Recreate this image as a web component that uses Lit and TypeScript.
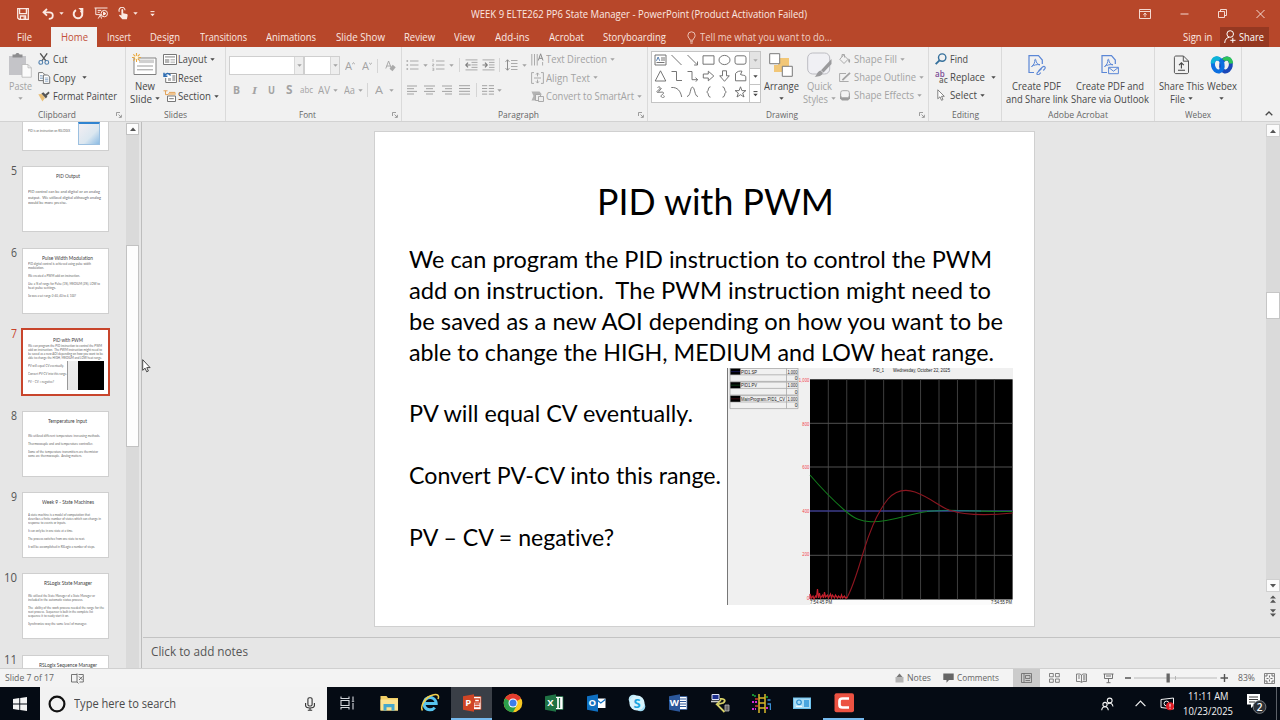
import { LitElement, html, css, svg, nothing } from "lit";
import type { TemplateResult } from "lit";
import { customElement, property, query, state } from "lit/decorators.js";
import { classMap } from "lit/directives/class-map.js";

/** Single line of text squeezed or stretched to a fixed width. */
@customElement("fit-text")
export class FitText extends LitElement {
  static styles = css`
    :host {
      display: inline-block;
      white-space: pre;
      flex-shrink: 0;
      text-align: left;
      font-variant-ligatures: none;
    }

    .inner {
      display: inline-block;
      transform-origin: 0 50%;
    }
  `;

  @property() text = "";
  @property({ type: Number }) w = 0;
  @state() private scale = 1;
  @query(".inner") private inner!: HTMLElement;

  firstUpdated() {
    this.style.width = `${this.w}px`;
    const natural = this.inner.getBoundingClientRect().width;
    if (natural > 0) this.scale = this.w / natural;
  }

  render() {
    return html`<span class="inner" style="transform: scaleX(${this.scale})">${this.text}</span>`;
  }
}

const t = (text: string, w: number) => html`<fit-text .text=${text} .w=${w}></fit-text>`;

const icon = (w: number, h: number, body: TemplateResult, cls = "") => html`
  <svg class="icon ${cls}" width=${w} height=${h} viewBox="0 0 ${w} ${h}" fill="none" stroke="currentColor">${body}</svg>
`;

const caret = (cls = "") => icon(5, 3, svg`<path d="M0.3 0.3h4.4L2.5 2.7z" fill="currentColor" stroke="none"/>`, `caret ${cls}`);

const launcher = icon(6, 6, svg`<path d="M0.5 4V0.5H4M2.5 2.5l2.5 2.5M5.4 2.8v2.6H2.8" stroke-width="0.8"/>`, "launcher");

// ---- title bar icons ----
const qat = {
  save: icon(12, 12, svg`<path d="M0.7 0.7h10.6v10.6H2.2L0.7 10z M2.6 0.7v5h6.8v-5M3.4 11.2V8h5.2v3.2" stroke-width="1.3"/><path d="M6.6 8.6h1.2v2.4H6.6z" fill="currentColor" stroke="none"/>`),
  undo: icon(12, 12, svg`<path d="M5 1L1.5 4.3 5 7.6M1.8 4.3h5.4c2 0 3.6 1.2 3.6 3.2s-1.6 3.4-4 3.4" stroke-width="1.8"/>`),
  redo: icon(12, 12, svg`<path d="M4 2.2A4.3 4.3 0 1 0 8.6 2.6" stroke-width="2"/><path d="M6.3 0h5v5z" fill="currentColor" stroke="none"/>`),
  show: icon(15, 13, svg`<path d="M0.5 1h13M1.8 1v6.6h5M6.5 7.6l-2.3 4M6.5 8l1 3.6M3.7 3.4h3.5M3.7 5.3h2" stroke-width="1"/><circle cx="10.3" cy="6.6" r="3.2" stroke-width="1"/><path d="M9.5 5.1v3l2.4-1.5z" fill="currentColor"/>`),
  touch: icon(11, 13, svg`<path d="M1.4 4.8A3 3 0 1 1 7 3.2" stroke-width="1.1"/><path d="M3.4 3c0-1.2 1.8-1.2 1.8 0v3.2l3.6 0.9c0.8 0.3 1 0.8 0.8 1.7l-0.7 3.4H4.3L1 8.6c0-1 1-1.1 2.4-0.1z" fill="currentColor" stroke="none"/>`),
  more: icon(5, 6, svg`<path d="M0.5 0.6h4" stroke-width="1"/><path d="M0.3 2.8h4.4L2.5 5.2z" fill="currentColor" stroke="none"/>`),
};

const win = {
  opts: icon(12, 10, svg`<path d="M0.5 0.5h11v9H0.5zM0.5 2.5h11M6 8V4.3M4.3 5.8L6 4.2l1.7 1.6" stroke-width="0.9"/>`),
  min: icon(9, 10, svg`<path d="M0.5 5h8" stroke-width="0.9"/>`),
  restore: icon(9, 10, svg`<path d="M0.5 2.5h6v6h-6zM2.5 2.5v-2h6v6h-2" stroke-width="0.9"/>`),
  close: icon(9, 10, svg`<path d="M0.5 1l8 8M8.5 1l-8 8" stroke-width="0.9"/>`),
};

// ---- ribbon icons ----
const rb = {
  paste: icon(24, 26, svg`<path d="M1 4h17v19H1z" fill="#c4c4c8" stroke="none"/><path d="M4.5 5.5V2.6H7.4C7.6 0.4 11.4 0.4 11.6 2.6h2.9v2.9z" fill="#8d8d8f" stroke="none"/><path d="M14 12.5h6l3.3 3.3v9.4H14z" fill="#fbfbfb" stroke="#b5b5b5" stroke-width="0.8"/><path d="M20 12.5v3.3h3.3" stroke="#b5b5b5" stroke-width="0.8"/>`),
  cut: icon(12, 12, svg`<path d="M2.2 0.3L8 8M9.2 0.3L3.8 8" stroke="#555" stroke-width="1.3"/><circle cx="2.8" cy="9.4" r="1.9" stroke="#4f7fae" stroke-width="1.1"/><circle cx="8.8" cy="9.4" r="1.9" stroke="#4f7fae" stroke-width="1.1"/>`),
  copy: icon(13, 12, svg`<path d="M0.6 0.6h4.2l2 2v6H0.6z" fill="#fff" stroke="#777"/><path d="M2 3.5h2.5M2 5h3M2 6.5h3" stroke="#7b9cc0" stroke-width="0.7"/><path d="M5.4 3h4.3l2 2v6.4H5.4z" fill="#fff" stroke="#777"/><path d="M6.9 6h3.4M6.9 7.6h3.4M6.9 9.2h3.4" stroke="#7b9cc0" stroke-width="0.8"/>`),
  painter: icon(12, 11, svg`<path d="M0.3 3.2L4 3l3 4-2.6 3.6z" fill="#eabf77" stroke="none"/><path d="M3.4 2.4l2-1.2 4 4.3-1.5 2z" fill="#555" stroke="none"/><path d="M7 3.6l3.7-3 0.9 1.4-3 3z" fill="#555" stroke="none"/>`),
  newSlide: icon(25, 24, svg`<path d="M2 5h22v16.5H2z" fill="#fff" stroke="#808080" stroke-width="1"/><path d="M7 6.5h15v3.6H7z" fill="#d0d0d0" stroke="none"/><path d="M5 13h16M5 16.8h16" stroke="#9b9b9b" stroke-width="1"/><path d="M4.5 0v9M0 4.5h9M1.3 1.3l6.4 6.4M7.7 1.3L1.3 7.7" stroke="#e9a83f" stroke-width="1.1"/><circle cx="4.5" cy="4.5" r="1.8" fill="#fff6dd" stroke="none"/>`),
  layout: icon(14, 11, svg`<path d="M0.5 0.5h13v10H0.5z" fill="#fff" stroke="#777"/><path d="M2 2h10v1.8H2zM2 5h4.3v4H2z" fill="#b6b6b6" stroke="none"/><path d="M7.5 5.5H12M7.5 7H12M7.5 8.6H12" stroke="#aaa" stroke-width="0.7"/>`),
  reset: icon(14, 11, svg`<path d="M4.5 1.5h9v9H2.7V6" fill="#fff" stroke="#777"/><path d="M9.3 3h3v6h-3zM5 6h3v3H5z" fill="#b6b6b6" stroke="none"/><path d="M1 0.8v3.4h3.4M1.2 4C2.5 1 6 0.3 7.6 3.5" stroke="#2f6eb3" stroke-width="1.5"/>`),
  section: icon(13, 12, svg`<path d="M0.5 0.8h4M2.5 0.8v4M2.5 4.6h9.5V2.4H6" stroke="#e2a35a" stroke-width="1"/><path d="M5 3h7.3v2H5z" fill="#f0c48f" stroke="none"/><path d="M4.5 6h8v5.5h-8z" fill="#fff" stroke="#777"/><path d="M6.2 8.7h4.6" stroke="#777"/>`),
  clear: icon(11, 12, svg`<path d="M0.8 8.5L3.6 1l2.8 7.5M1.7 6h3.8" stroke-width="0.9"/><path d="M4.5 8.8l3.2-4 3 2.4-3.2 4z" fill="#aaa" stroke="none"/>`),
  bullets: icon(13, 12, svg`<path d="M0.5 2h1.6M0.5 6h1.6M0.5 10h1.6" stroke-width="1.5"/><path d="M4 2h8.5M4 6h8.5M4 10h8.5" stroke-width="0.9"/>`),
  numbers: icon(13, 12, svg`<path d="M1 0v3M0.4 5h1.4v1H0.6v1h1.4M0.4 9.2h1.4v2.4H0.4M0.6 10.4h1" stroke-width="0.7"/><path d="M4 2h8.5M4 6h8.5M4 10h8.5" stroke-width="0.9"/>`),
  outdent: icon(13, 12, svg`<path d="M0.5 0.9h12M6.5 3.4h6M6.5 5.9h6M6.5 8.4h6M0.5 10.9h12" stroke-width="0.9"/><path d="M5.6 6H1M3 3.7L0.8 6 3 8.3" stroke="#7e7e7e" stroke-width="1.2"/>`),
  indent: icon(13, 12, svg`<path d="M0.5 0.9h12M7 3.4h5.5M7 5.9h5.5M7 8.4h5.5M0.5 10.9h12" stroke-width="0.9"/><path d="M0.5 6H5M3 3.7L5.2 6 3 8.3" stroke="#7e7e7e" stroke-width="1.2"/>`),
  spacing: icon(13, 12, svg`<path d="M2.5 0.8v10.4M0.6 2.8l1.9-2 1.9 2M0.6 9.2l1.9 2 1.9-2" stroke="#8c8c8c"/><path d="M6 1.5h6.5M6 4.5h6.5M6 7.5h6.5M6 10.5h6.5" stroke-width="0.9"/>`),
  alignL: icon(11, 10, svg`<path d="M0 1h10M0 3.7h7M0 6.4h10M0 9h7" stroke-width="1"/>`),
  alignC: icon(11, 10, svg`<path d="M0 1h11M2 3.7h7M0 6.4h11M2 9h7" stroke-width="1"/>`),
  alignR: icon(11, 10, svg`<path d="M1 1h10M4 3.7h7M1 6.4h10M4 9h7" stroke-width="1"/>`),
  justify: icon(11, 10, svg`<path d="M0 0.7h11M0 3.5h11M0 6.3h11M0 9.1h11" stroke-width="1"/>`),
  columns: icon(12, 10, svg`<path d="M0 0.7h5.2M0 3.5h5.2M0 6.3h5.2M0 9.1h5.2M6.8 0.7H12M6.8 3.5H12M6.8 6.3H12M6.8 9.1H12" stroke-width="1"/>`),
  textDir: icon(13, 13, svg`<path d="M0.8 1v11.5M3.5 1v11.5M6.2 1v11.5" stroke-width="0.9"/><path d="M7.3 7.5L9.6 0.8 12 7.5M8.2 5.3h2.9" stroke="#888" stroke-width="1"/><path d="M11.6 9v3.5" stroke-width="0.9"/>`),
  alignText: icon(13, 12, svg`<path d="M3 0.6H0.6v10.8H3M10 0.6h2.4v10.8H10M6.5 1v3.4M6.5 7.6V11M5 2.6l1.5-1.7L8 2.6M5 9.4l1.5 1.7L8 9.4M3 6h7" stroke-width="0.9"/>`),
  smartArt: icon(13, 11, svg`<path d="M0.5 0.5h8l2.5 3H5.5v6H0.5l2-4.5z" fill="#b3b3b3" stroke="none"/><path d="M4.5 3.5h5v6h-5z" fill="#eee" stroke-width="0.9"/><path d="M7.5 5.5h5v5h-5z" fill="#eee" stroke-width="0.9"/>`),
  arrange: icon(24, 24, svg`<path d="M9 5h11v13H9z" fill="#f2c777" stroke="none"/><path d="M5 12h8v7H5z" fill="#f2c777" stroke="none"/><path d="M0.7 0.7h10v10h-10zM13.3 13.3h10v10h-10z" fill="#fff" stroke="#7a7a7a" stroke-width="1"/>`),
  quick: icon(25, 26, svg`<rect x="0.7" y="1" width="22" height="21" rx="5" fill="#f0f0f4" stroke="#bcbcc2"/><path d="M24.5 7v5l-8 8.5-2.5-2.2z" fill="#9a9a9c" stroke="none"/><path d="M13.5 18.4l2.4 2.4C15 24 12 24.6 7.5 24.8c2.5-1.5 2.5-5.6 6-6.4z" fill="#9a9a9c" stroke="none"/>`),
  fill: icon(12, 11, svg`<path d="M4.5 1L9 5.4 5 9.5 0.8 5.3zM3 3V0.5h2.5v3" stroke-width="0.9"/><path d="M9.5 4.5c2 0.5 2 3 1 4.5-1.3-1-1.6-2.5-1-4.5z" fill="currentColor" stroke="none"/>`),
  outline: icon(12, 11, svg`<path d="M7 1.5H0.6v8h9" stroke-width="0.9"/><path d="M3.4 8.2L11 0.8" stroke-width="1.8"/>`),
  effects: icon(12, 11, svg`<path d="M1 4v4.4L3 10.4h6l2-2V3.5z" fill="#9d9d9d" stroke="none"/><rect x="1.7" y="0.7" width="8.6" height="7" rx="2" fill="#f4f4f4" stroke-width="0.9"/>`),
  find: icon(12, 12, svg`<circle cx="7.2" cy="4.6" r="3.7" stroke="#35709c" stroke-width="1.4"/><path d="M4.5 7.3L0.7 11.2" stroke="#35709c" stroke-width="1.9"/>`),
  select: icon(10, 12, svg`<path d="M2.8 0.8v9l2.2-2 1.5 3.5 1.5-0.7-1.5-3.3h2.8z" fill="#fff" stroke="#777" stroke-width="0.9"/>`),
  pdfLink: icon(18, 20, svg`<path d="M6 17.5H1V0.7h9.5L14.3 5v4" stroke="#5b87d6" stroke-width="1.2"/><path d="M3.5 11.5C6 10 7 7 6.8 5c0-1 1-1 1 0C8 8 10 9.5 12 9.8c-3-0.7-6 0.3-8.5 1.7z" stroke="#5b87d6" stroke-width="1"/><path d="M10.5 16l4-4c2-1.5 3.5 0.3 2.2 2l-1.4 1.5M13.6 13.5l-4.2 4.2c-1.4 1.6 0.4 2.8 1.9 1.4l1.5-1.5" stroke="#5b87d6" stroke-width="1.1"/>`),
  pdfMail: icon(18, 20, svg`<path d="M6 17.5H1V0.7h9.5L14.3 5v4" stroke="#5b87d6" stroke-width="1.2"/><path d="M3.5 11.5C6 10 7 7 6.8 5c0-1 1-1 1 0C8 8 10 9.5 12 9.8c-3-0.7-6 0.3-8.5 1.7z" stroke="#5b87d6" stroke-width="1"/><path d="M7.6 12.3h9.8v6.4H7.6zM7.8 12.6l4.7 3.6 4.7-3.6" stroke="#5b87d6" stroke-width="1"/>`),
  shareFile: icon(17, 20, svg`<path d="M3 1h7.5l5 5v11c0 1-0.6 1.6-1.6 1.6H3c-1 0-1.6-0.6-1.6-1.6V2.6C1.4 1.6 2 1 3 1zM10.3 1v5.2h5" stroke="#555" stroke-width="1"/><path d="M8.4 13.4V8M6 10.2l2.4-2.4 2.4 2.4M5 15.3h7" stroke="#444" stroke-width="1.1"/>`),
  webex: icon(24, 20, svg`<ellipse cx="16" cy="10" rx="4.8" ry="6.6" transform="rotate(12 16 10)" stroke="#1a48b8" stroke-width="4"/><ellipse cx="7.800" cy="10" rx="4.8" ry="6.6" transform="rotate(-12 7.800 10)" stroke="#0c6fe0" stroke-width="4"/><path d="M2.6 8.5C2.8 3.200 7 2 9.500 4.800" stroke="#0cb4d8" stroke-width="4"/><path d="M13.600 5.200c2-2.800 7-2.400 7.600 3.300" stroke="#2cc45a" stroke-width="4"/>`),
};

// three rows of the shape gallery, each glyph on a 12x12 box
const SHAPES = [
  svg`<path d="M0.5 1h11v10h-11z M6.5 4h4M6.5 6h4M2 8.5h8"/><path d="M2 6.8L3.6 3l1.6 3.8" stroke="#4472a8"/>`,
  svg`<path d="M1 1l10 10"/>`,
  svg`<path d="M1 1l9.5 9.5M11 7.5V11H7.6"/>`,
  svg`<path d="M0.5 1.8h11v8.4h-11z"/>`,
  svg`<ellipse cx="6" cy="6" rx="5.5" ry="4.6"/>`,
  svg`<rect x="0.5" y="1.8" width="11" height="8.4" rx="2"/>`,
  svg`<path d="M6 0.8l5.3 10.2H0.7z"/>`,
  svg`<path d="M1 1.5h5v9h5.5"/>`,
  svg`<path d="M1 1.5h4.5v8.2H11M9 7.7l2.2 2L9 11.8"/>`,
  svg`<path d="M0.8 4h5V1.2L11.3 6 5.8 10.8V8h-5z"/>`,
  svg`<path d="M4 0.8h4v5h2.8L6 11.3 1.2 5.8H4z"/>`,
  svg`<path d="M1 10.8V3.5C3 1.2 5 0.8 7.5 1.2L6 4.5c2 1 4.5 0.5 5.3 2v4.3z"/>`,
  svg`<path d="M3 1.5C6-0.5 6.5 2.5 4 4S2 7 5 6.4s5-0.4 3.5 1.6S5.5 9 7 11s4 0 2-1.6M7 2L4 6"/>`,
  svg`<path d="M0.8 1.5C7 1 10 5 11.2 11"/>`,
  svg`<path d="M0.5 10.5C4.5 10 3.5 1 6 1.2S8 10.5 11.5 10.5"/>`,
  svg`<path d="M8 0.8C5 0.8 6.7 5 4.2 6 6.7 7 5 11.2 8 11.2"/>`,
  svg`<path d="M4 0.8C7 0.8 5.3 5 7.8 6 5.3 7 7 11.2 4 11.2"/>`,
  svg`<path d="M6 0.8l1.4 3.8h4L8.2 7l1.3 4L6 8.7 2.5 11l1.3-4L0.6 4.6h4z"/>`,
];

interface TextLine {
  text: string;
  w: number;
}

interface Thumb {
  num: number;
  numW: number;
  title: string;
  titleW: number;
  kind: string;
  lines: TextLine[];
}

const l = (text = "", w = 0): TextLine => ({ text, w });

const THUMBS: Thumb[] = [
  // scrolled halfway out of the panel, so it carries no number or title
  { num: 4, numW: 0, title: "", titleW: 0, kind: "picture", lines: [l("PID is an instruction on RSLOGIX", 42)] },
  {
    num: 5, numW: 6, title: "PID Output", titleW: 24, kind: "large",
    lines: [l("PID control can be and digital or an analog", 72), l("output.  We utilized digital although analog", 73), l("would be more precise.", 39)],
  },
  {
    num: 6, numW: 6, title: "Pulse Width Modulation", titleW: 51, kind: "",
    lines: [
      l("PID digital control is achieved using pulse width", 63), l("modulation.", 16), l(),
      l("We created a PWM add on instruction.", 52), l(),
      l("Use a % of range for Pulse (1%), MEDIUM (2%), LOW to", 72), l("heat pulse settings.", 28), l(),
      l("So was a set range 0-40, 40 to 4, 100?", 48),
    ],
  },
  {
    num: 7, numW: 6, title: "PID with PWM", titleW: 30, kind: "chart",
    lines: [
      l("We can program the PID instruction to control the PWM", 74), l("add on instruction.  The PWM instruction might need to", 74),
      l("be saved as a new AOI depending on how you want to be", 75), l("able to change the HIGH, MEDIUM and LOW heat range.", 74), l(),
      l("PV will equal CV eventually.", 36), l(), l("Convert PV-CV into this range.", 39), l(), l("PV – CV = negative?", 26),
    ],
  },
  {
    num: 8, numW: 6, title: "Temperature Input", titleW: 39, kind: "low",
    lines: [
      l("We utilized different temperature increasing methods.", 72), l(),
      l("Thermocouple and and temperature controller.", 65), l(),
      l("Some of the temperature transmitters are thermistor", 70), l("some are thermocouple.  Analog matters.", 54),
    ],
  },
  {
    num: 9, numW: 6, title: "Week 9 - State Machines", titleW: 52, kind: "mid",
    lines: [
      l("A state machine is a model of computation that", 62), l("describes a finite number of states which can change in", 73), l("response to events or inputs.", 38), l(),
      l("It can only be in one state at a time.", 45), l(), l("The process switches from one state to next.", 57), l(),
      l("It will be accomplished in RSLogix a number of steps.", 67),
    ],
  },
  {
    num: 10, numW: 13, title: "RSLogix State Manager", titleW: 48, kind: "mid",
    lines: [
      l("We utilized the State Manager of a State Manager or", 67), l("included in the automatic status process.", 55), l(),
      l("The  ability of the work process needed the range for the", 76), l("next process.  Sequencer is built in the complete list", 65), l("sequence it to ready start it on.", 41), l(),
      l("Synchronize way the same level of manager.", 59),
    ],
  },
  { num: 11, numW: 13, title: "RSLogix Sequence Manager", titleW: 58, kind: "", lines: [] },
];

@customElement("ppt-titlebar")
export class PptTitlebar extends LitElement {
  static styles = css`
    :host {
      display: block;
      height: 47px;
      background: #b7472a;
      color: #fbe9e3;
      font: 10.5px/20px "Open Sans", "Noto Sans", sans-serif;
    }

    .top {
      display: grid;
      grid-template-columns: 471px 1fr auto;
      align-items: center;
      height: 27px;
    }

    .qat {
      display: flex;
      align-items: center;
      height: 25px;
      padding-left: 17px;
    }

    .qat .icon:nth-child(2) { margin-left: 13px; }
    .qat .icon:nth-child(3) { margin-left: 5px; }
    .qat .icon:nth-child(4) { margin-left: 8px; }
    .qat .icon:nth-child(5) { margin-left: 10px; }
    .qat .icon:nth-child(6) { margin-left: 9px; }
    .qat .icon:nth-child(7) { margin-left: 4px; }
    .qat .icon:nth-child(8) { margin-left: 12px; }

    .win {
      display: flex;
      gap: 29px;
      align-items: center;
      height: 26px;
      padding-right: 15px;
    }

    .tabs {
      display: flex;
      height: 20px;
      align-items: stretch;
    }

    .tab {
      padding: 0 9.7px;
    }

    .tab.file {
      padding: 0 19px 0 17px;
    }

    .tab.active {
      background: #f3f2f1;
      color: #c2503a;
    }

    .tell {
      display: flex;
      align-items: center;
      gap: 4px;
      padding-left: 11px;
      color: #f0cfc4;
    }

    .right {
      display: flex;
      margin-left: auto;
      padding-right: 11px;
    }

    .share {
      display: flex;
      align-items: center;
      gap: 3px;
      width: 45px;
      padding-left: 4px;
      margin-left: 8px;
      background: #953821;
      color: #fff;
    }
  `;

  private tabs: [string, number][] = [
    ["File", 15], ["Home", 27], ["Insert", 24], ["Design", 30], ["Transitions", 47], ["Animations", 50], ["Slide Show", 49],
    ["Review", 31], ["View", 21], ["Add-ins", 34.5], ["Acrobat", 35], ["Storyboarding", 63],
  ];

  render() {
    return html`
      <div class="top">
        <div class="qat">${qat.save}${qat.undo}${caret()}${qat.redo}${qat.show}${qat.touch}${caret()}${qat.more}</div>
        ${t("WEEK 9 ELTE262 PP6 State Manager - PowerPoint (Product Activation Failed)", 336)}
        <div class="win">${win.opts}${win.min}${win.restore}${win.close}</div>
      </div>
      <div class="tabs">
        ${this.tabs.map(
          ([name, w]) => html`<div class=${classMap({ tab: true, file: name === "File", active: name === "Home" })}>${t(name, w)}</div>`
        )}
        <div class="tell">
          ${icon(9, 13, svg`<path d="M3 9.2C3 7.4 0.9 7 0.9 4.4a3.6 3.6 0 0 1 7.2 0C8.1 7 6 7.4 6 9.2zM3 10.8h3M3.4 12.2h2.2" stroke-width="0.9"/>`)}
          ${t("Tell me what you want to do...", 132)}
        </div>
        <div class="right">
          ${t("Sign in", 29.5)}
          <div class="share">
            ${icon(12, 14, svg`<circle cx="6.2" cy="4" r="3.3"/><path d="M0.7 13C0.9 9.8 2.6 7.6 5 7.4M8.8 7.8v5M6.3 10.3h5.2"/>`)}
            ${t("Share", 25)}
          </div>
        </div>
      </div>
    `;
  }
}

@customElement("ppt-ribbon")
export class PptRibbon extends LitElement {
  static styles = css`
    :host {
      display: flex;
      height: 75px;
      box-sizing: border-box;
      background: #f1f1f1;
      border-bottom: 1px solid #d2d2d2;
      color: #484848;
      font: 10.5px/14px "Open Sans", "Noto Sans", sans-serif;
    }

    .group {
      display: grid;
      grid-template-rows: 61px 12px;
      box-sizing: border-box;
      border-right: 1px solid #dadada;
    }

    .body {
      display: flex;
      min-width: 0;
    }

    .caption {
      display: grid;
      grid-template-columns: 1fr 12px;
      justify-items: center;
      font-size: 9.6px;
      line-height: 13px;
      color: #666;
    }

    .caption.plain { grid-template-columns: 1fr; }

    .launcher {
      align-self: center;
      color: #888;
    }

    .g-clip { width: 126px; }
    .g-slides { width: 100px; }
    .g-font { width: 176px; }
    .g-para { width: 246px; }
    .g-draw { width: 281px; }
    .g-edit { width: 73px; }
    .g-adobe { width: 153px; }
    .g-webex { width: 87px; }

    .big {
      display: flex;
      flex-direction: column;
      align-items: center;
      line-height: 13px;
    }

    .big .glyph {
      display: flex;
      align-items: center;
      justify-content: center;
      height: 29px;
      padding-top: 3px;
    }

    .big .sub {
      display: flex;
      align-items: center;
      gap: 3px;
      height: 13px;
    }

    .big .first {
      height: 13px;
      display: flex;
    }

    .big fit-text { line-height: 14px; }

    .b-paste { margin-left: 7px; width: 26px; }
    .b-new { margin-left: 3px; width: 31px; }
    .b-arr { margin-left: 0; width: 40px; }
    .b-quick { margin-left: 1px; width: 35px; }
    .b-pdf1 { margin-left: 3px; width: 63px; }
    .b-pdf2 { margin-left: 2px; width: 79px; }
    .b-file { margin-left: 3px; width: 46px; }
    .b-webex { margin-left: 2px; width: 31px; }

    .rows {
      display: flex;
      flex-direction: column;
      padding-top: 3px;
    }

    .row {
      display: flex;
      align-items: center;
      height: 18.6px;
    }

    .rows.tight .row { height: 18px; }

    .row .lead {
      display: flex;
      width: 15px;
    }

    .row .caret { margin-left: 3px; }
    .wide .caret { margin-left: 6px; }

    .r-clip { margin-left: 5px; }
    .r-slides { margin-left: 3px; }
    .r-para { margin-left: 4px; }
    .r-draw { margin-left: 2px; }
    .r-edit { margin-left: 6px; }

    .dim { color: #a3a3a3; }

    .fonts {
      padding: 9px 0 0 3px;
    }

    .line {
      display: flex;
      align-items: center;
    }

    .line .icon { flex-shrink: 0; }
    .l2 { margin-top: 8px; }
    .space { flex-shrink: 0; }

    .paras { padding: 12px 0 0 3px; }
    .paras .line { height: 12px; }
    .paras .l2 { margin-top: 13px; }

    .combo {
      display: flex;
      justify-content: flex-end;
      box-sizing: border-box;
      height: 19px;
      border: 1px solid #cfcfcf;
      background: #fff;
    }

    .combo .drop {
      display: flex;
      align-items: center;
      justify-content: center;
      width: 8px;
      background: #eee;
      border-left: 1px solid #d8d8d8;
    }

    .combo.face { width: 75px; }
    .combo.size { width: 36px; }
    .letter { font-size: 11px; }
    .bold { font-weight: 700; }
    .italic { font-family: "Liberation Serif", serif; font-style: italic; font-weight: 700; }
    .under { text-decoration: underline; font-weight: 700; }
    .strike { text-decoration: line-through; font-size: 9px; }
    .shadow { font-weight: 700; font-size: 12px; }
    .sep { width: 1px; height: 14px; background: #d5d5d5; }

    .gallery {
      display: grid;
      grid-template-columns: 97px 11px;
      box-sizing: border-box;
      width: 110px;
      height: 52px;
      margin: 4px 0 0 3px;
      border: 1px solid #c4c4c4;
      background: #fff;
    }

    .shapes {
      display: grid;
      grid-template-columns: repeat(6, 16px);
      grid-template-rows: repeat(3, 16px);
      place-items: center;
      color: #666;
    }

    .scroller {
      display: grid;
      grid-template-rows: 17px 16px 17px;
      border-left: 1px solid #c4c4c4;
    }

    .scroller span {
      display: flex;
      align-items: center;
      justify-content: center;
      border-bottom: 1px solid #c4c4c4;
    }

    .scroller span:first-child {
      background: #e3e3e3;
      color: #aaa;
    }

    .scroller span:last-child { border-bottom: 0; }

    .abac {
      font-size: 8px;
      line-height: 6px;
      font-weight: 600;
      width: 15px;
    }

    .abac .ab { color: #7c4d96; }
    .abac .ac { display: block; padding-left: 4px; color: #666; }

    .tail {
      display: flex;
      flex: 1;
      align-items: flex-end;
      justify-content: flex-end;
      padding: 0 7px 5px 0;
    }
  `;

  private group(cls: string, name: string, w: number, body: unknown, hasLauncher = true) {
    return html`
      <div class="group ${cls}">
        <div class="body">${body}</div>
        <div class=${classMap({ caption: true, plain: !hasLauncher })}>${t(name, w)}${hasLauncher ? launcher : nothing}</div>
      </div>
    `;
  }

  private row(glyph: unknown, text: string, w: number, arrow = true, cls = "") {
    return html`<div class="row ${cls}"><span class="lead">${glyph}</span>${t(text, w)}${arrow ? caret() : nothing}</div>`;
  }

  private big(glyph: unknown, a: string, aw: number, b: string, bw: number, arrow: boolean, cls: string) {
    return html`
      <div class="big ${cls}">
        <span class="glyph">${glyph}</span>
        <span class="first">${t(a, aw)}</span>
        <span class="sub">${b ? t(b, bw) : nothing}${arrow ? caret() : nothing}</span>
      </div>
    `;
  }

  private sp(px: number) {
    return html`<span class="space" style="width: ${px}px"></span>`;
  }

  render() {
    const sp = this.sp;
    return html`
      ${this.group("g-clip", "Clipboard", 38, html`
        ${this.big(rb.paste, "Paste", 23, "", 0, true, "b-paste dim")}
        <div class="rows r-clip">
          ${this.row(rb.cut, "Cut", 14.5, false)}
          ${this.row(rb.copy, "Copy", 22.5, true, "wide")}
          ${this.row(rb.painter, "Format Painter", 64, false)}
        </div>
      `)}
      ${this.group("g-slides", "Slides", 23, html`
        ${this.big(rb.newSlide, "New", 20, "Slide", 22, true, "b-new")}
        <div class="rows r-slides">
          ${this.row(rb.layout, "Layout", 29)}
          ${this.row(rb.reset, "Reset", 24, false)}
          ${this.row(rb.section, "Section", 33)}
        </div>
      `, false)}
      ${this.group("g-font", "Font", 17, html`
        <div class="fonts dim">
          <div class="line">
            <span class="combo face"><span class="drop">${caret()}</span></span>
            <span class="combo size"><span class="drop">${caret()}</span></span>
            ${sp(5)}${t("A", 7)}${icon(3, 8, svg`<path d="M0 2.5L1.5 0.5 3 2.5" stroke-width="0.8"/>`)}
            ${sp(7)}${t("A", 7)}${icon(3, 8, svg`<path d="M0 0.5L1.5 2.5 3 0.5" stroke-width="0.8"/>`)}
            ${sp(5)}<span class="sep"></span>${sp(7)}${rb.clear}
          </div>
          <div class="line l2 letter">
            ${sp(4)}<span class="bold">${t("B", 7)}</span>${sp(12)}<span class="italic">${t("I", 5)}</span>
            ${sp(11)}<span class="under">${t("U", 7)}</span>${sp(11)}<span class="shadow">${t("S", 6.5)}</span>
            ${sp(7)}<span class="strike">${t("abc", 13)}</span>${sp(5)}<span>${t("AV", 12)}</span>${sp(3)}${caret()}
            ${sp(6)}${t("Aa", 11)}${sp(3)}${caret()}${sp(4)}<span class="sep"></span>${sp(7)}${t("A", 8)}${sp(6)}${caret()}
          </div>
        </div>
      `)}
      ${this.group("g-para", "Paragraph", 41, html`
        <div class="paras dim">
          <div class="line">
            ${sp(1)}${rb.bullets}${sp(4)}${caret()}${sp(4)}${rb.numbers}${sp(4)}${caret()}${sp(5)}<span class="sep"></span>${sp(5)}${rb.outdent}${sp(4)}${rb.indent}
            ${sp(4)}<span class="sep"></span>${sp(5)}${rb.spacing}${sp(4)}${caret()}
          </div>
          <div class="line l2">
            ${sp(2)}${rb.alignL}${sp(6)}${rb.alignC}${sp(6)}${rb.alignR}${sp(7)}${rb.justify}${sp(6)}<span class="sep"></span>${sp(5)}${rb.columns}${sp(3)}${caret()}
          </div>
        </div>
        <div class="rows r-para dim">
          ${this.row(rb.textDir, "Text Direction", 61)}
          ${this.row(rb.alignText, "Align Text", 44)}
          ${this.row(rb.smartArt, "Convert to SmartArt", 88)}
        </div>
      `)}
      ${this.group("g-draw", "Drawing", 32, html`
        <div class="gallery">
          <div class="shapes">
            ${SHAPES.map((s) => html`<svg width="13" height="12" viewBox="0 0 12 12" fill="none" stroke="currentColor" stroke-width="0.9">${s}</svg>`)}
          </div>
          <div class="scroller">
            <span>${caret()}</span><span>${caret()}</span>
            <span>${qat.more}</span>
          </div>
        </div>
        ${this.big(rb.arrange, "Arrange", 35, "", 0, true, "b-arr")}
        ${this.big(rb.quick, "Quick", 25, "Styles", 25, true, "b-quick dim")}
        <div class="rows tight r-draw dim">
          ${this.row(rb.fill, "Shape Fill", 43)}
          ${this.row(rb.outline, "Shape Outline", 62)}
          ${this.row(rb.effects, "Shape Effects", 60)}
        </div>
      `)}
      ${this.group("g-edit", "Editing", 27, html`
        <div class="rows tight r-edit">
          ${this.row(rb.find, "Find", 18, false)}
          ${this.row(html`<span class="abac"><span class="ab">ab</span><span class="ac">ac</span></span>`, "Replace", 35, true, "wide")}
          ${this.row(rb.select, "Select", 27)}
        </div>
      `, false)}
      ${this.group("g-adobe", "Adobe Acrobat", 60, html`
        ${this.big(rb.pdfLink, "Create PDF", 49, "and Share link", 62, false, "b-pdf1")}
        ${this.big(rb.pdfMail, "Create PDF and", 68, "Share via Outlook", 78, false, "b-pdf2")}
      `, false)}
      ${this.group("g-webex", "Webex", 26, html`
        ${this.big(rb.shareFile, "Share This", 45, "File", 15, true, "b-file")}
        ${this.big(rb.webex, "Webex", 30, "", 0, true, "b-webex")}
      `, false)}
      <div class="tail">${icon(8, 5, svg`<path d="M0.7 4.3L4 1l3.3 3.3" stroke-width="1.3"/>`)}</div>
    `;
  }
}

@customElement("trend-chart")
export class TrendChart extends LitElement {
  static styles = css`
    :host {
      display: block;
      width: 286px;
      height: 237px;
    }

    svg {
      display: block;
      font: 5px "Liberation Sans", Arial, sans-serif;
    }

    .axis { fill: #f0414d; }
    .label { fill: #222; }
  `;

  private pens = [
    { name: "PID1.SP", color: "#15154e", w: 16 },
    { name: "PID1.PV", color: "#0d3a17", w: 16 },
    { name: "MainProgram.PID1_CV", color: "#3a0c10", w: 44 },
  ];

  private scale: [string, number][] = [["1,000", 10.5], ["800", 7], ["600", 7], ["400", 7], ["200", 7], ["0", 2.6]];

  render() {
    const vertical = Array.from({ length: 10 }, (_, i) => 101.3 + i * 18.45);
    return html`
      <svg width="286" height="237" viewBox="0 0 286 237">
        <rect width="286" height="237" fill="#f0f0f0" />
        <rect width="1" height="237" fill="#777" />
        <rect x="83" y="231.5" width="203" height="5.5" fill="#fbfbfb" />
        ${this.pens.map(
          (p, i) => svg`
            <g transform="translate(3, ${i * 13.6})">
              <path d="M0 0.5h68M0 6.8h68M0 13.4h68M0 0v13.4M56.5 0v13.4M68 0v13.4" stroke="#aaa" stroke-width="0.8" fill="none"/>
              <rect x="0.4" y="0.6" width="10" height="6" fill="#000"/>
              <path d="M1 3.6h9" stroke=${p.color} stroke-width="1"/>
              <text class="label" x="11" y="5.5" textLength=${p.w} lengthAdjust="spacingAndGlyphs">${p.name}</text>
              <text class="label" x="57.5" y="5.5" textLength="10" lengthAdjust="spacingAndGlyphs">1.000</text>
              <text class="label" x="64.8" y="12">0</text>
            </g>`
        )}
        <text class="label" x="146" y="3.6" textLength="11" lengthAdjust="spacingAndGlyphs">PID_1</text>
        <text class="label" x="166" y="3.6" textLength="57" lengthAdjust="spacingAndGlyphs">Wednesday, October 22, 2025</text>
        <rect x="83" y="11.3" width="202.6" height="220.2" fill="#000" />
        ${vertical.map((x) => svg`<path d="M${x} 11.3v220" stroke="#3e3e3e" stroke-width="1"/>`)}
        ${[55.3, 99, 143, 187.3].map((y) => svg`<path d="M83 ${y}h202" stroke="#505050" stroke-width="1"/>`)}
        ${this.scale.map(
          ([v, w], i) => svg`<text class="axis" x=${82.3 - w} y=${14.3 + i * 43.5} textLength=${w} lengthAdjust="spacingAndGlyphs">${v}</text>`
        )}
        <path d="M83 143h202.6" stroke="#3333a8" stroke-width="1" />
        <path d="M83 107C95 121 108 134 119 143.5C128 151 134 153.5 144 153.7C164 154 178 147 197 144C215 141 226 142.5 240 142.7S270 143.8 285.6 143.5" stroke="#127a1c" stroke-width="1.1" fill="none" />
        <path d="M200 143.3C220 142 240 142.5 254 143" stroke="#1e7078" stroke-width="1" fill="none" />
        <path d="M119 231C123 226 129 209 137 182C145 156 152 142 161 131C170 121 179 121 188 124C202 129 212 138 222 142C238 147.5 262 147.5 285.6 145" stroke="#8c1620" stroke-width="1.1" fill="none" />
        <path d="M83 231v-5l1.5 4 1.5-2 1 3 1.5-3 1 1 1-8 1 9 1-5 1 5 2-3 1 3 1-6 1 5 2-2 1 3 2-4 1 4 1-3 2 3 1-3 2 3 1-2 2 2 1-3 1 3 2-2 1 2 2-1" stroke="#c4202c" stroke-width="1.2" fill="none" />
        <text class="label" x="83" y="236" textLength="22" lengthAdjust="spacingAndGlyphs">7:54:45 PM</text>
        <text class="label" x="264" y="236" textLength="21" lengthAdjust="spacingAndGlyphs">7:54:55 PM</text>
      </svg>
    `;
  }
}

@customElement("slide-list")
export class SlideList extends LitElement {
  static styles = css`
    :host {
      display: grid;
      grid-template-columns: 126px 13px;
      height: 100%;
      overflow: hidden;
      box-sizing: border-box;
      border-right: 1px solid #bdbdbd;
      font-family: "Open Sans", "Noto Sans", sans-serif;
    }

    .list {
      display: flex;
      flex-direction: column;
      gap: 15.4px;
      margin-top: -37px;
    }

    .item {
      display: grid;
      grid-template-columns: 17px 87px;
      column-gap: 5px;
    }

    .num {
      display: flex;
      justify-content: flex-end;
      font-size: 12px;
      line-height: 10px;
      color: #555;
    }

    .slide {
      position: relative;
      box-sizing: border-box;
      height: 66px;
      padding: 5px 0 0 5px;
      border: 1px solid #cfcfcf;
      background: #fff;
      font-family: Lato, "Open Sans", sans-serif;
      color: #3c3c3c;
      overflow: hidden;
    }

    .active .num { color: #c8452c; }

    .active .slide {
      outline: 1px solid #c8452c;
      border-color: #c8452c;
    }

    .title {
      height: 8px;
      text-align: center;
      padding-right: 1px;
      font-size: 5.4px;
      line-height: 8px;
    }

    .text {
      font-size: 3.2px;
      line-height: 4px;
      color: #666;
    }

    .text div { height: 4px; }
    .low .text { padding-top: 9px; }
    .mid .text { padding-top: 7px; }
    .large .text { padding-top: 9px; font-size: 4px; line-height: 5.4px; }
    .large .text div { height: 5.4px; }
    .chart .title { padding-top: 1px; }

    .graph {
      position: absolute;
      right: 4px;
      bottom: 4px;
      width: 36px;
      height: 29px;
      border-left: 1px solid #999;
      background: linear-gradient(#eee, #e9e9e9);
      display: flex;
      justify-content: flex-end;
    }

    .graph::after {
      content: "";
      width: 26px;
      background: #000;
    }

    .picture .text { padding-top: 30px; }

    .shot {
      position: absolute;
      right: 8px;
      bottom: 5px;
      width: 20px;
      height: 20px;
      border: 1px solid #9cc0e0;
      border-top: 2px solid #2f83d0;
      background: linear-gradient(135deg, #f2eef2, #dbe7f0 60%, #8cbce4);
    }

    .bar {
      display: grid;
      grid-template-rows: 12px 1fr 13px;
      margin: 1px 0 0 0;
      background: #dadada;
    }

    .btn, .handle {
      display: flex;
      align-items: center;
      justify-content: center;
      box-sizing: border-box;
      border: 1px solid #c2c2c2;
      background: #fdfdfd;
      color: #555;
    }

    .track { padding-top: 110px; }
    .handle { height: 202px; }
  `;

  render() {
    return html`
      <div class="list">
        ${THUMBS.map(
          (s) => html`
            <div class=${classMap({ item: true, active: s.num === 7 })}>
              <div class="num">${s.numW ? t(String(s.num), s.numW) : nothing}</div>
              <div class="slide ${s.kind}">
                <div class="title">${s.title ? t(s.title, s.titleW) : nothing}</div>
                <div class="text">${s.lines.map((x) => html`<div>${x.text ? t(x.text, x.w) : nothing}</div>`)}</div>
                ${s.kind === "chart" ? html`<div class="graph"></div>` : nothing}
                ${s.kind === "picture" ? html`<div class="shot"></div>` : nothing}
              </div>
            </div>
          `
        )}
      </div>
      <div class="bar">
        <span class="btn">${icon(6, 4, svg`<path d="M0 4l3-3.6L6 4z" fill="currentColor" stroke="none"/>`)}</span>
        <div class="track"><div class="handle"></div></div>
        <span class="btn">${icon(6, 4, svg`<path d="M0 0l3 3.6L6 0z" fill="currentColor" stroke="none"/>`)}</span>
      </div>
    `;
  }
}

@customElement("slide-stage")
export class SlideStage extends LitElement {
  static styles = css`
    :host {
      display: grid;
      grid-template-rows: 516px 1fr;
      margin-left: 1px;
      height: 100%;
    }

    .view {
      display: grid;
      grid-template-columns: 1fr 14px;
      border-bottom: 1px solid #c3c3c3;
    }

    .canvas { padding: 9px 0 0 231px; }

    .slide {
      position: relative;
      box-sizing: border-box;
      width: 661px;
      height: 496px;
      border: 1px solid #d0d0d0;
      background: #fff;
      color: #000;
      font-family: Lato, "Open Sans", sans-serif;
    }

    .title {
      position: absolute;
      left: 222px;
      top: 47px;
      font-size: 36.5px;
      line-height: 44px;
    }

    .body {
      position: absolute;
      left: 34px;
      top: 112.4px;
      font-size: 23.5px;
      line-height: 30.8px;
    }

    .body div { height: 30.8px; }

    .chart {
      position: absolute;
      left: 352px;
      top: 236px;
    }

    .vbar {
      display: flex;
      flex-direction: column;
      padding-top: 2px;
      color: #555;
    }

    .vbar .btn {
      display: flex;
      align-items: center;
      justify-content: center;
      box-sizing: border-box;
      height: 13px;
      border: 1px solid #d0d0d0;
      background: #fbfbfb;
    }

    .vbar .btn.bare { border: 0; background: none; height: 14px; }

    .track {
      height: 442px;
      background: #dadada;
      box-sizing: border-box;
      padding-top: 155px;
    }

    .handle {
      box-sizing: border-box;
      height: 27px;
      border: 1px solid #c6c6c6;
      background: #fff;
    }

    .notes {
      padding: 5px 0 0 8px;
      font: 11.8px/17px "Open Sans", "Noto Sans", sans-serif;
      color: #555;
    }
  `;

  private lines: TextLine[] = [
    l("We can program the PID instruction to control the PWM", 583), l("add on instruction.  The PWM instruction might need to", 582),
    l("be saved as a new AOI depending on how you want to be", 594), l("able to change the HIGH, MEDIUM and LOW heat range.", 585), l(),
    l("PV will equal CV eventually.", 284), l(), l("Convert PV-CV into this range.", 312), l(), l("PV – CV = negative?", 205),
  ];

  render() {
    const up = svg`<path d="M0 4l3-3.6L6 4z" fill="currentColor" stroke="none"/>`;
    const down = svg`<path d="M0 0l3 3.6L6 0z" fill="currentColor" stroke="none"/>`;
    return html`
      <div class="view">
        <div class="canvas">
          <div class="slide">
            <div class="title">${t("PID with PWM", 237)}</div>
            <div class="body">${this.lines.map((x) => html`<div>${x.text ? t(x.text, x.w) : nothing}</div>`)}</div>
            <trend-chart class="chart"></trend-chart>
          </div>
        </div>
        <div class="vbar">
          <span class="btn">${icon(6, 4, up)}</span>
          <div class="track"><div class="handle"></div></div>
          <span class="btn">${icon(6, 4, down)}</span>
          <span class="btn bare">${icon(6, 8, svg`<path d="M0 3.6l3-3.2 3 3.2zM0 7.8l3-3.2 3 3.2z" fill="currentColor" stroke="none"/>`)}</span>
          <span class="btn bare">${icon(6, 8, svg`<path d="M0 0.3l3 3.2 3-3.2zM0 4.5l3 3.2 3-3.2z" fill="currentColor" stroke="none"/>`)}</span>
        </div>
      </div>
      <div class="notes">${t("Click to add notes", 97)}</div>
    `;
  }
}

@customElement("ppt-status")
export class PptStatus extends LitElement {
  static styles = css`
    :host {
      display: flex;
      align-items: center;
      height: 19px;
      box-sizing: border-box;
      padding-left: 5px;
      border-top: 1px solid #d0d0d0;
      background: #f3f3f3;
      color: #666;
      font: 9.6px/16px "Open Sans", "Noto Sans", sans-serif;
    }

    .book { margin-left: 17px; }

    .right {
      display: flex;
      align-items: center;
      height: 100%;
      margin-left: auto;
      padding-right: 5px;
    }

    .notes { margin-right: 3px; }
    .comments { margin: 0 3px 0 12px; }

    .mode {
      display: flex;
      align-items: center;
      justify-content: center;
      width: 27.2px;
      height: 100%;
    }

    .mode.on {
      background: #cbcbcb;
      margin-left: 14px;
    }

    .zoom { margin: 0 10px 0 3px; }
    .fit { margin-left: 9px; }
  `;

  render() {
    return html`
      ${t("Slide 7 of 17", 49)}
      ${icon(13, 11, svg`<path d="M6 1.5H0.5v7.5H6V0.5M6 9l1.5 1.5M7.5 1.5h4.8V9H8.5M8 3.5l3.5 3.5M11.5 3.5L8 7" stroke-width="0.9"/>`, "book")}
      <div class="right">
        ${icon(9, 10, svg`<path d="M0.5 4h8v5.5h-8z" fill="#b5b5b5" stroke="none"/><path d="M1.5 4l3-3.5 3 3.5z" fill="#777" stroke="none"/>`, "notes")}
        ${t("Notes", 24)}
        ${icon(11, 10, svg`<path d="M0.3 0.5h10.4v6.5H6L3.5 9.7V7H0.3z" fill="#666" stroke="none"/>`, "comments")}
        ${t("Comments", 42)}
        <span class="mode on">${icon(11, 10, svg`<path d="M0.5 0.5h10v9h-10zM3 0.5v9M4.5 2.5h4.5v3H4.5zM4.5 7.5h4.5" stroke-width="0.8"/>`)}</span>
        <span class="mode">${icon(11, 10, svg`<path d="M0.5 0.5h3.8v3.3H0.5zM6.5 0.5h3.8v3.3H6.5zM0.5 6h3.8v3.3H0.5zM6.5 6h3.8v3.3H6.5z" stroke-width="0.8"/>`)}</span>
        <span class="mode">${icon(11, 10, svg`<path d="M0.5 1h3.5l1.5 1 1.5-1h3.5v7.5H7l-1.5 1-1.5-1H0.5zM5.5 2v7M2 3h2M2 5h2" stroke-width="0.8"/><path d="M7 2h2.5v5.5H7z" fill="#aaa" stroke="none"/>`)}</span>
        <span class="mode">${icon(11, 11, svg`<path d="M0.5 1h10M1.5 1v4.5h8V1M5.5 5.5v4M3.5 9.7h4M3 3h5" stroke-width="0.9"/>`)}</span>
        ${icon(103, 12, svg`<path d="M0 6h6M95.5 6h8M99.5 2v8" stroke="#555" stroke-width="1.4"/><path d="M9 6h83M50.5 4v4" stroke="#aaa" stroke-width="0.8"/><path d="M41.5 1.5h3.3v9h-3.3z" fill="#666" stroke="none"/>`, "zoom")}
        ${t("83%", 17)}
        ${icon(11, 11, svg`<path d="M0.5 0.5h10v10h-10z" stroke-width="0.8"/><path d="M2 4V2h2M7 2h2v2M2 7v2h2M9 7v2H7M5.5 2.5v2M5.5 6.5v2M2.5 5.5h2M6.5 5.5h2" stroke-width="0.9"/>`, "fit")}
      </div>
    `;
  }
}

const office = (color: string, dark: string, letter: string, sheet: TemplateResult) => svg`
  <path d="M9 2.5h9v13H9z" fill="#fff" stroke=${color} stroke-width="0.8"/>${sheet}
  <path d="M0 2.3L11 0.3v17.4L0 15.7z" fill=${dark}/>
  <text x="5.3" y="12.4" text-anchor="middle" fill="#fff" font-weight="700" font-size="9.5">${letter}</text>
`;

@customElement("win-taskbar")
export class WinTaskbar extends LitElement {
  static styles = css`
    :host {
      display: flex;
      height: 33px;
      background: #050b14;
      color: #f2f2f2;
      font: 11px/15px "Open Sans", "Noto Sans", sans-serif;
    }

    .start, .app {
      display: flex;
      align-items: center;
      justify-content: center;
      box-sizing: border-box;
    }

    .start { width: 40px; }

    .search {
      display: flex;
      align-items: center;
      box-sizing: border-box;
      width: 287px;
      padding: 0 12px 0 8px;
      background: #f2f2f2;
      color: #4a4a4a;
      font-size: 11.8px;
    }

    .search fit-text { margin: 0 auto 0 8px; }

    .app {
      width: 41.35px;
      border-bottom: 2px solid transparent;
    }

    .app.open { border-bottom-color: #76b9ed; }
    .app.front { background: #3a3f47; }
    .app svg { font-family: "Open Sans", sans-serif; margin-top: 1px; }

    .tray {
      display: flex;
      align-items: center;
      margin-left: auto;
    }

    .tray .up { margin: 0 14px 0 21px; }

    .clock {
      display: flex;
      flex-direction: column;
      align-items: center;
      width: 50px;
      margin: 0 0 0 8px;
      font-size: 10.6px;
    }

    .alerts { margin-left: 13px; }
    .peek { width: 1px; height: 33px; margin: 0 3px 0 9px; background: #5b6067; }
  `;

  private app(body: TemplateResult, cls = "") {
    return html`<div class="app ${cls}"><svg width="20" height="20" viewBox="-1 -1 20 20" fill="none">${body}</svg></div>`;
  }

  render() {
    return html`
      <div class="start">
        ${icon(14, 14, svg`<path d="M0 2l6.3-1v5.5H0zM7.2 0.9L14 0v6.5H7.2zM0 7.4h6.3v5.5L0 12zM7.2 7.4H14V14l-6.8-1z" fill="#f3f3f3" stroke="none"/>`)}
      </div>
      <div class="search">
        ${icon(18, 18, svg`<circle cx="9" cy="9" r="7.4" stroke="#111" stroke-width="2.2"/>`)}
        ${t("Type here to search", 102)}
        ${icon(10, 14, svg`<rect x="2.9" y="0.7" width="4.2" height="8.3" rx="1.5" stroke="#333" stroke-width="1.1"/><path d="M0.6 6v2.5C0.6 10 2 11 5 11s4.4-1 4.4-2.5V6M5 11v2.5M2.8 13.3h4.4" stroke="#333" stroke-width="1.1"/>`)}
      </div>
      ${this.app(svg`<path d="M2 2.5v2h8v-2M2 15.5v-2h8v2M2 6.5h8v5H2zM14 2.5v4M14 9v6.5M12.8 7.3h2.4" stroke="#d4d8dc" stroke-width="1.1"/>`)}
      ${this.app(svg`<path d="M0.5 2h6l1.5 2h10v12.5H0.5z" fill="#f1ce66"/><path d="M0.5 5.5h17.5v11H0.5z" fill="#fbe291"/><path d="M3.5 16.5V10h11v6.5h-3v-3.3h-5v3.3z" fill="#45a7cd"/>`)}
      ${this.app(svg`<path d="M3 9.5h12.2A6.2 6.2 0 1 0 13.8 13.6" stroke="#57c4ef" stroke-width="3"/><path d="M1.5 16.5C-1 13 3 5 9 2s10-1.5 8 3" stroke="#f2cf4d" stroke-width="1.5"/>`)}
      ${this.app(office("#c94a2a", "#d04525", "P", svg`<path d="M11.5 5h5v3h-5zM11.5 10h5M11.5 12.5h5" stroke="#d04525" stroke-width="1.4"/>`), "open front")}
      ${this.app(svg`
        <circle cx="9" cy="9" r="9.3" fill="#f8c822"/>
        <path d="M9 9L0.95 4.35A9.3 9.3 0 0 1 17.05 4.35z" fill="#e33b2e"/>
        <path d="M9 9L0.95 4.35A9.3 9.3 0 0 0 9 18.3L13 11z" fill="#2b9e4b"/>
        <path d="M9 4.4h8.05L9 9z" fill="#e33b2e"/>
        <circle cx="9" cy="9" r="4.5" fill="#fff"/><circle cx="9" cy="9" r="3.5" fill="#3b7ded"/>`)}
      ${this.app(office("#1f7244", "#1f7244", "X", svg`<path d="M11.5 4v10M14.5 4v10" stroke="#1f7244" stroke-width="1.3"/>`))}
      ${this.app(svg`
        <path d="M9 4.5h9.5v9.5H9z" fill="#fff"/><path d="M9.5 5.5l4.3 3.5 4.5-3.5" stroke="#1173c5" stroke-width="1.2"/>
        <path d="M0 2.3L11 0.3v17.4L0 15.7z" fill="#0f6fc0"/>
        <text x="5.3" y="12.4" text-anchor="middle" fill="#fff" font-weight="700" font-size="9.5">O</text>`)}
      ${this.app(svg`
        <circle cx="5.5" cy="5.5" r="4.8" fill="#bdeafa"/><circle cx="12.5" cy="12.5" r="4.8" fill="#9fdcf5"/><circle cx="9" cy="9" r="7.6" fill="#d6f3fd"/>
        <text x="9" y="13.6" text-anchor="middle" fill="#1aa5e0" font-weight="700" font-size="13">S</text>`)}
      ${this.app(office("#2b579a", "#2b579a", "W", svg`<path d="M11 5h6M11 7.5h6M11 10h6M11 12.5h6" stroke="#2b579a" stroke-width="1.1"/>`))}
      ${this.app(svg`
        <path d="M1 0.5h7v5H1z" fill="#1d2f8e" stroke="#dfe3f5" stroke-width="1"/><path d="M0 7.5h9" stroke="#ccc" stroke-width="1.6"/>
        <path d="M9 5c5-1 6 2 3 4l-6 1.5L13.5 18" stroke="#d8d268" stroke-width="1.8"/>
        <path d="M5.5 10.5L10 6" stroke="#d8d268" stroke-width="1.5"/><path d="M14 11h4v6h-4z" fill="#666" stroke="#bbb" stroke-width="0.8"/>`)}
      ${this.app(svg`
        <path d="M7 0v19M13 0v19M7 4h6M7 9h6M7 14h6" stroke="#d7b928" stroke-width="1.5"/>
        <path d="M0 1h3v3M14 3h2" stroke="#1dba3d" stroke-width="1.3" stroke-dasharray="2 1"/><path d="M0 8h5M0 15h4M14 14h3" stroke="#d02bd0" stroke-width="2" stroke-dasharray="2 1"/>
        <path d="M15.5 6h3M15.5 10h3v6" stroke="#3a8fd4" stroke-width="1.5"/><path d="M3 5h3M3 12h3" stroke="#cf3b2b" stroke-width="1.3"/>`)}
      ${this.app(svg`
        <rect x="0" y="3.5" width="18" height="11.5" fill="#6fc3ee"/><rect x="1" y="4.5" width="16" height="9.5" fill="#a9dcf5"/>
        <circle cx="6" cy="8.3" r="2.3" stroke="#2c8fd0" stroke-width="1.2"/><path d="M11 6h5v7h-5z" fill="#4aa6e0"/><path d="M3 12.3h6" stroke="#fff"/>`)}
      ${this.app(svg`<rect x="-0.5" y="-0.7" width="19.5" height="19" rx="2" fill="#ec5242"/><path d="M14 4.5H7.5C5.5 4.5 4.5 5.5 4.5 7v4c0 1.5 1 2.5 3 2.5H14" stroke="#fff" stroke-width="2.7"/>`, "open")}
      <div class="tray">
        ${icon(13, 14, svg`<circle cx="8.7" cy="3.5" r="2.4" stroke-width="1.1"/><circle cx="4" cy="7.5" r="2.1" stroke-width="1.1"/><path d="M0.7 13.3C1 10.5 2.2 9.7 4 9.7s3 1 3.3 3.6M6.5 7c1.5-1.3 5-1.3 5.5 2.5" stroke-width="1.1"/>`)}
        ${icon(11, 7, svg`<path d="M0.6 6.2L5.5 1l4.9 5.2" stroke-width="1.2"/>`, "up")}
        ${icon(15, 14, svg`<path d="M1 2.5l12.5-1.5v11L1 10.5z" stroke-width="1"/><circle cx="6.5" cy="6.5" r="2.4" stroke-width="1"/><circle cx="10" cy="9.3" r="4" fill="#e01b24" stroke="none"/><path d="M10 6.8v3M10 10.8v1" stroke-width="1.1"/>`)}
        <div class="clock">${t("11:11 AM", 40.5)}${t("10/23/2025", 50)}</div>
        ${icon(21, 22, svg`<path d="M1 1h13v10.5H9L5 15v-3.5H1z" fill="#fff" stroke="none"/><path d="M3 4h9M3 6.5h9M3 9h6" stroke="#222" stroke-width="0.9"/><circle cx="13.5" cy="14" r="6.4" fill="#2b2f35" stroke="#8a8d91" stroke-width="0.8"/><text x="13.5" y="17.6" text-anchor="middle" font-size="10" font-weight="600" fill="#fff" stroke="none">2</text>`, "alerts")}
        <span class="peek"></span>
      </div>
    `;
  }
}

@customElement("app-root")
export class AppRoot extends LitElement {
  static styles = css`
    :host {
      position: relative;
      display: flex;
      flex-direction: column;
      width: 1280px;
      height: 720px;
      overflow: hidden;
      background: #e6e6e6;
    }

    .work {
      display: grid;
      grid-template-columns: 142px 1fr;
      height: 546px;
    }

    .pointer {
      position: absolute;
      left: 142px;
      top: 359px;
    }
  `;

  render() {
    return html`
      <ppt-titlebar></ppt-titlebar>
      <ppt-ribbon></ppt-ribbon>
      <div class="work">
        <slide-list></slide-list>
        <slide-stage></slide-stage>
      </div>
      <ppt-status></ppt-status>
      <win-taskbar></win-taskbar>
      <svg class="pointer" width="10" height="14" viewBox="0 0 10 14">
        <path d="M0.7 0.7v10.6l2.4-2.1 1.6 3.6 1.7-0.8-1.6-3.4h3.3z" fill="#fff" stroke="#333" stroke-width="0.9" />
      </svg>
    `;
  }
}
